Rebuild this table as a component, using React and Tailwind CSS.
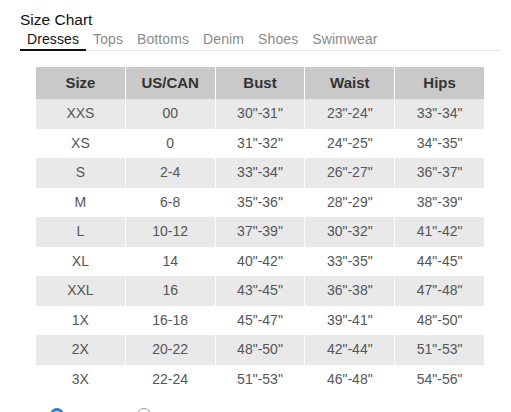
import React, { useState } from 'react'

const tabs = ['Dresses', 'Tops', 'Bottoms', 'Denim', 'Shoes', 'Swimwear']

const rows = [
  ['XXS', '00', '30"-31"', '23"-24"', '33"-34"'],
  ['XS', '0', '31"-32"', '24"-25"', '34"-35"'],
  ['S', '2-4', '33"-34"', '26"-27"', '36"-37"'],
  ['M', '6-8', '35"-36"', '28"-29"', '38"-39"'],
  ['L', '10-12', '37"-39"', '30"-32"', '41"-42"'],
  ['XL', '14', '40"-42"', '33"-35"', '44"-45"'],
  ['XXL', '16', '43"-45"', '36"-38"', '47"-48"'],
  ['1X', '16-18', '45"-47"', '39"-41"', '48"-50"'],
  ['2X', '20-22', '48"-50"', '42"-44"', '51"-53"'],
  ['3X', '22-24', '51"-53"', '46"-48"', '54"-56"'],
]

const App = () => {
  const [active, setActive] = useState('Dresses')
  const [unit, setUnit] = useState('in')

  return (
    <div className="w-[511px] h-[412px] overflow-hidden bg-white px-[20px] pt-[10px] font-['Liberation_Sans',Arial,sans-serif]">
      <h2 className="text-[15.5px] leading-[20px] text-[#111]">Size Chart</h2>

      <div className="flex border-b border-[#e2e2e2] mr-[-9px]">
        {tabs.map(t => (
          <button
            key={t}
            onClick={() => setActive(t)}
            className={
              t === active
                ? 'px-[7px] pt-[1px] pb-[1px] text-[14px] leading-[17px] tracking-[0.1px] text-[#111] border-b-2 border-[#111] mb-[-1px]'
                : 'px-[7px] pt-[1px] pb-[1px] text-[14px] leading-[17px] tracking-[0.1px] text-[#8a8a8a] border-b-2 border-transparent mb-[-1px]'
            }
          >
            {t}
          </button>
        ))}
      </div>

      <div className="ml-[16px] mt-[16px] w-[448px]">
        <div className="grid grid-cols-5 gap-x-px h-[32px]">
          {['Size', 'US/CAN', 'Bust', 'Waist', 'Hips'].map(h => (
            <div key={h} className="bg-[#c9c9c9] flex items-center justify-center text-[15px] font-semibold text-[#333]">
              {h}
            </div>
          ))}
        </div>
        {rows.map((r, i) => (
          <div key={r[0]} className="grid grid-cols-5 gap-x-px h-[29.5px]">
            {r.map((c, j) => (
              <div
                key={j}
                className={
                  i % 2 === 0
                    ? 'bg-[#e9e9e9] flex items-center justify-center text-[14px] text-[#555]'
                    : 'bg-white flex items-center justify-center text-[14px] text-[#555]'
                }
              >
                {c}
              </div>
            ))}
          </div>
        ))}
      </div>

      <div className="flex gap-[73px] ml-[30px] mt-[14px]">
        <button
          aria-label="Inches"
          onClick={() => setUnit('in')}
          className={unit === 'in' ? 'w-[14px] h-[14px] rounded-full border-[3px] border-[#2d7fd6] bg-[#cfe3f7]' : 'w-[14px] h-[14px] rounded-full border border-[#999]'}
        />
        <button
          aria-label="Centimeters"
          onClick={() => setUnit('cm')}
          className={unit === 'cm' ? 'w-[14px] h-[14px] rounded-full border-[3px] border-[#2d7fd6] bg-[#cfe3f7]' : 'w-[14px] h-[14px] rounded-full border border-[#999]'}
        />
      </div>
    </div>
  )
}

export default App
